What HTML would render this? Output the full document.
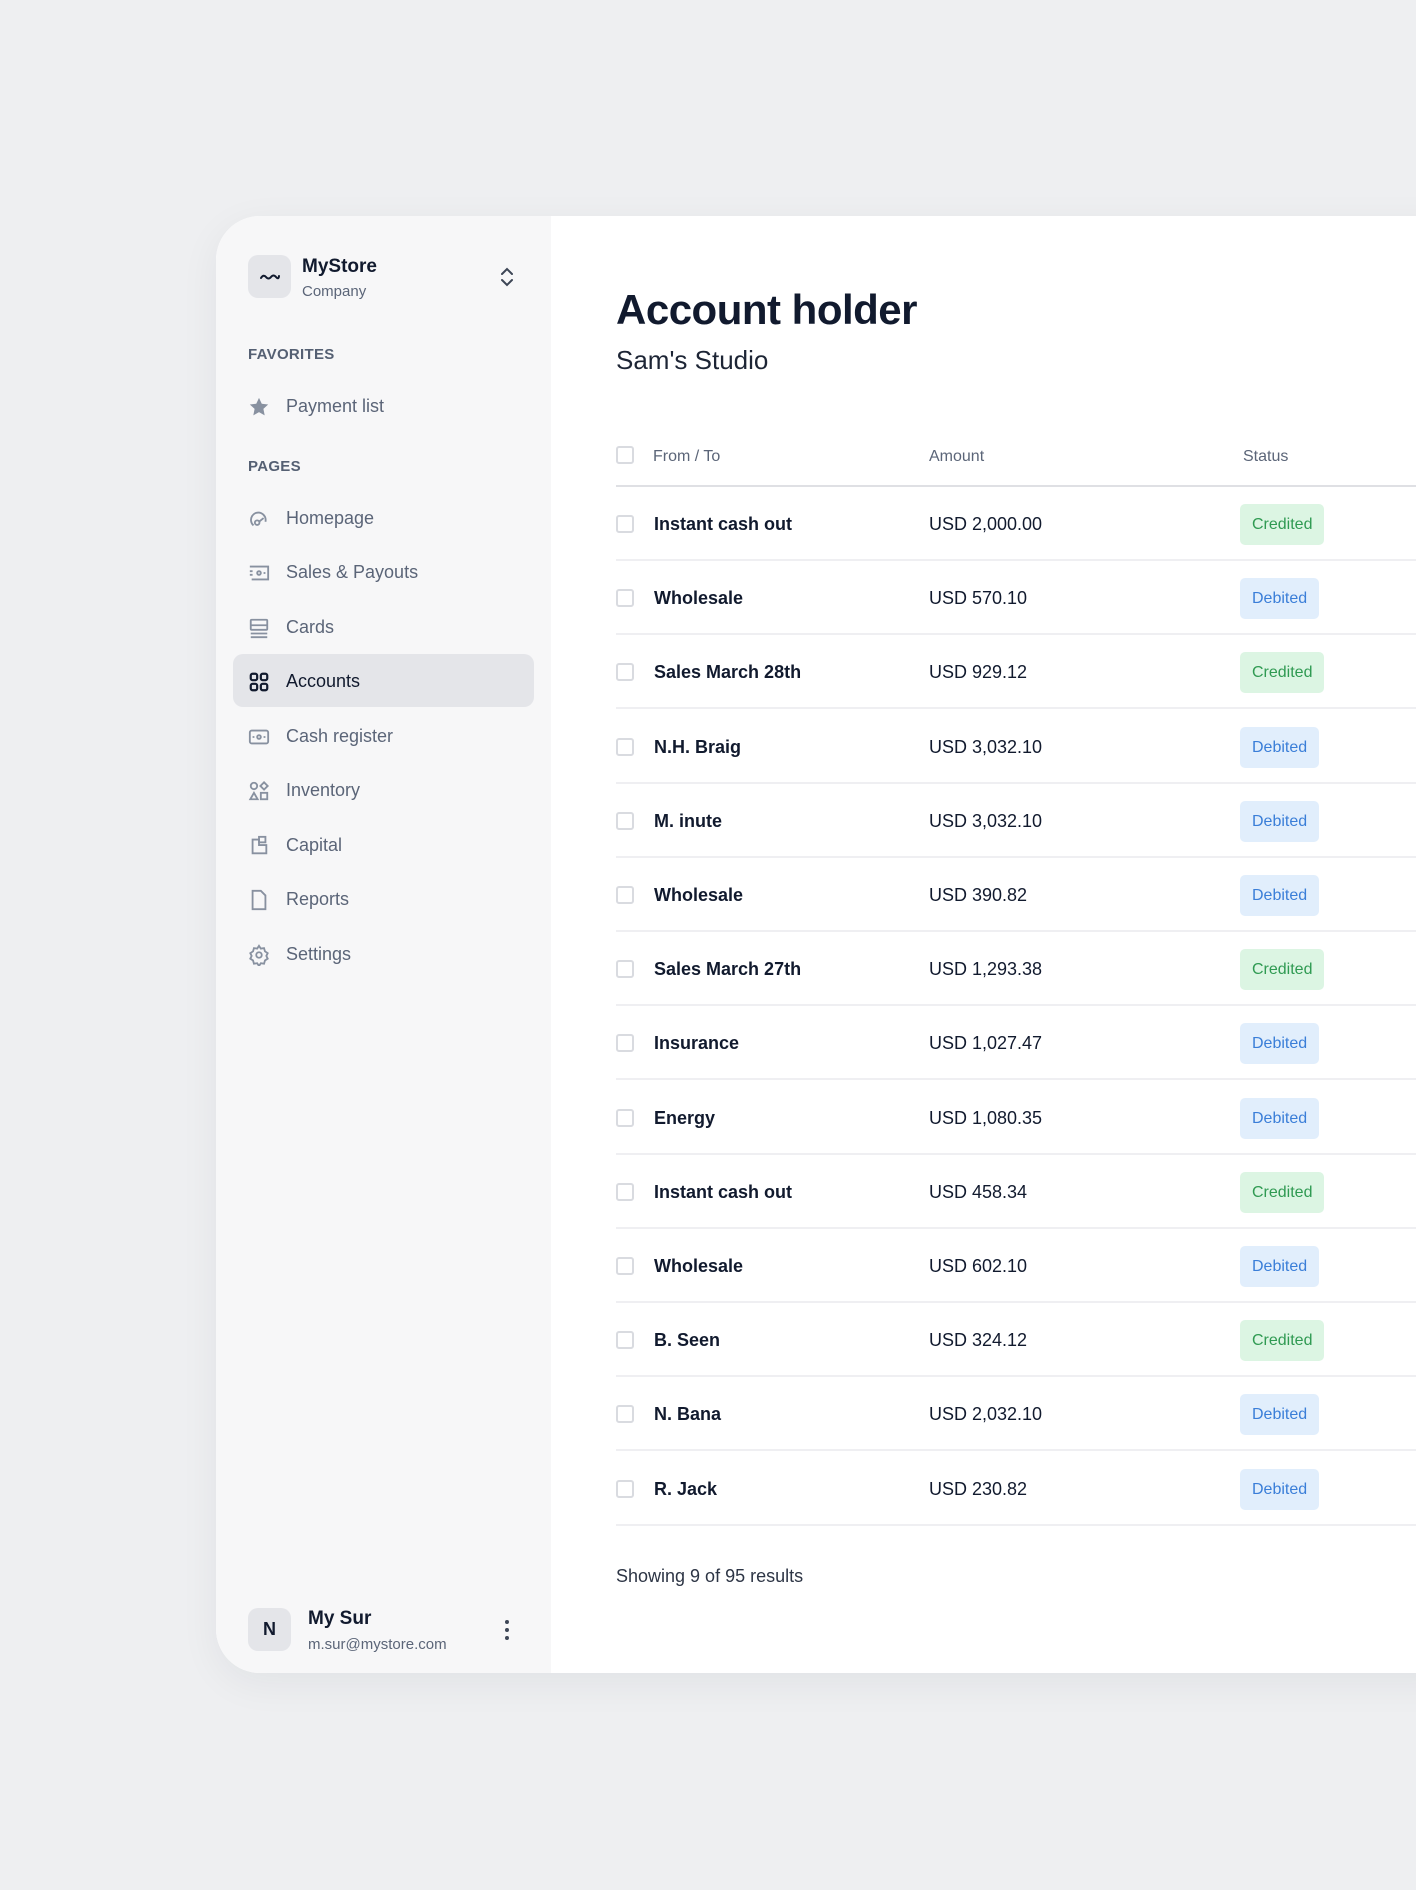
<!DOCTYPE html>
<html><head><meta charset="utf-8"><style>
*{box-sizing:border-box;margin:0;padding:0}
body{width:1416px;height:1890px;background:#eeeff1;font-family:"Liberation Sans",sans-serif;position:relative;overflow:hidden;color:#111a2e}
.card{position:absolute;left:216px;top:216px;width:1240px;height:1457px;border-radius:44px 0 0 44px;overflow:hidden;background:#fff;box-shadow:0 10px 40px rgba(20,30,50,.06)}
.side{position:absolute;left:0;top:0;width:335px;height:100%;background:#f7f7f8}
.abs{position:absolute}
.logo{left:32px;top:39px;width:43px;height:43px;border-radius:10px;background:#e4e5e9}
.t1{left:86px;top:40px;font-size:19px;font-weight:bold}
.t2{left:86px;top:67px;font-size:15px;color:#5b6578}
.sec{left:32px;font-size:15px;font-weight:bold;color:#556073;letter-spacing:.3px}
.nav{left:70px;font-size:18px;color:#5b6578}
.ic{left:32px;width:22px;height:22px}
.hl{left:17px;top:438px;width:301px;height:53px;border-radius:10px;background:#e4e5e9}
.main{position:absolute;left:335px;top:0;right:0;height:100%}
h1{position:absolute;left:65px;top:70px;font-size:42px;font-weight:bold;letter-spacing:-.5px}
.sub{left:65px;top:129px;font-size:26px;color:#1d2535}
.th{top:232px;font-size:16px;color:#5b6578}
.cb{width:18px;height:18px;border:2px solid #d9dbe0;border-radius:3px;background:#fff}
.row{position:absolute;left:65px;width:900px;height:74px;border-bottom:2px solid #efeff2}
.row .cb{position:absolute;left:0;top:28px}
.row .n{position:absolute;left:38px;top:27px;font-size:18px;font-weight:bold}
.row .a{position:absolute;left:313px;top:27px;font-size:18px}
.b{position:absolute;left:624px;top:17px;height:41px;padding:0 12px;line-height:41px;border-radius:5px;font-size:16px}
.c{background:#dcf5e3;color:#2f9a52}
.d{background:#e1eefc;color:#3a7ed8}
</style></head><body>
<div class="card">
<div class="side">
<div class="abs logo"><svg width="43" height="43" viewBox="0 0 43 43"><path d="M13 23 Q15.5 19 18 22 T23 22 T28 22 T31 21" fill="none" stroke="#111a2e" stroke-width="2" stroke-linecap="round"/></svg></div>
<div class="abs t1">MyStore</div>
<div class="abs t2">Company</div>
<svg class="abs" style="left:283px;top:50px" width="16" height="22" viewBox="0 0 16 22"><path d="M3 8l5-5 5 5M3 14l5 5 5-5" fill="none" stroke="#3d4656" stroke-width="2" stroke-linecap="round"/></svg>
<div class="abs sec" style="top:130px">FAVORITES</div>
<svg class="abs ic" style="top:180px" viewBox="0 0 24 24"><path d="M12 2l3 6.5 7 .8-5.2 4.8 1.4 7L12 17.6 5.8 21.1l1.4-7L2 9.3l7-.8z" fill="#8891a0"/></svg>
<div class="abs nav" style="top:180px">Payment list</div>
<div class="abs sec" style="top:242px">PAGES</div>
<div class="abs hl"></div>
<svg class="abs ic" style="top:292px" viewBox="0 0 24 24" fill="none" stroke="#8891a0" stroke-width="2"><path d="M6 19A8 8 0 1 1 19 15"/><circle cx="10" cy="16" r="2.5"/><path d="M12 15l5-4"/></svg>
<div class="abs nav" style="top:292px">Homepage</div>
<svg class="abs ic" style="top:346px" viewBox="0 0 24 24" fill="none" stroke="#8891a0" stroke-width="2"><path d="M2 5h20v14H4M2 10h3M2 14h3"/><circle cx="12" cy="12" r="2"/><path d="M17 12h2"/></svg>
<div class="abs nav" style="top:346px">Sales &amp; Payouts</div>
<svg class="abs ic" style="top:401px" viewBox="0 0 24 24" fill="none" stroke="#8891a0" stroke-width="2"><rect x="3" y="3" width="18" height="11" rx="1"/><path d="M3 9h18M3 18h18M3 22h18"/></svg>
<div class="abs nav" style="top:401px">Cards</div>
<svg class="abs ic" style="top:455px" viewBox="0 0 24 24" fill="none" stroke="#111a2e" stroke-width="2.4"><rect x="3" y="3" width="7" height="7" rx="2"/><rect x="14" y="3" width="7" height="7" rx="2"/><rect x="3" y="14" width="7" height="7" rx="2"/><rect x="14" y="14" width="7" height="7" rx="2"/></svg>
<div class="abs nav" style="top:455px;color:#111a2e">Accounts</div>
<svg class="abs ic" style="top:510px" viewBox="0 0 24 24" fill="none" stroke="#8891a0" stroke-width="2"><rect x="2" y="5" width="20" height="14" rx="2"/><circle cx="12" cy="12" r="2"/><path d="M5 12h2M17 12h2"/></svg>
<div class="abs nav" style="top:510px">Cash register</div>
<svg class="abs ic" style="top:564px" viewBox="0 0 24 24" fill="none" stroke="#8891a0" stroke-width="2"><circle cx="6.5" cy="6.5" r="3.5"/><path d="M17.5 2.5l4 4-4 4-4-4z"/><path d="M6.5 14l4 7h-8z"/><rect x="14" y="14" width="7" height="7"/></svg>
<div class="abs nav" style="top:564px">Inventory</div>
<svg class="abs ic" style="top:619px" viewBox="0 0 24 24" fill="none" stroke="#8891a0" stroke-width="2"><path d="M5 5v15h15v-9h-8V5z"/><rect x="12" y="2" width="7" height="6"/></svg>
<div class="abs nav" style="top:619px">Capital</div>
<svg class="abs ic" style="top:673px" viewBox="0 0 24 24" fill="none" stroke="#8891a0" stroke-width="2"><path d="M5 2h9l5 5v15H5z"/></svg>
<div class="abs nav" style="top:673px">Reports</div>
<svg class="abs ic" style="top:728px" viewBox="0 0 24 24" fill="none" stroke="#8891a0" stroke-width="2"><circle cx="12" cy="12" r="3"/><path d="M12 2l2 3 3.5-.5 1 3.5 3 2-1.5 3 1.5 3-3 2-1 3.5-3.5-.5-2 3-2-3-3.5.5-1-3.5-3-2 1.5-3-1.5-3 3-2 1-3.5 3.5.5z"/></svg>
<div class="abs nav" style="top:728px">Settings</div>
<div class="abs" style="left:32px;top:1392px;width:43px;height:43px;border-radius:10px;background:#e4e5e9;text-align:center;line-height:43px;font-weight:bold;font-size:18px">N</div>
<div class="abs" style="left:92px;top:1392px;font-size:19px;font-weight:bold">My Sur</div>
<div class="abs" style="left:92px;top:1420px;font-size:15px;color:#5b6578">m.sur@mystore.com</div>
<svg class="abs" style="left:287px;top:1403px" width="8" height="22"><circle cx="4" cy="3" r="2" fill="#3d4656"/><circle cx="4" cy="11" r="2" fill="#3d4656"/><circle cx="4" cy="19" r="2" fill="#3d4656"/></svg>
</div>
<div class="main">
<h1>Account holder</h1>
<div class="abs sub">Sam's Studio</div>
<div class="abs cb" style="left:65px;top:230px"></div>
<div class="abs th" style="left:102px">From / To</div>
<div class="abs th" style="left:378px">Amount</div>
<div class="abs th" style="left:692px">Status</div>
<div class="abs" style="left:65px;top:269px;width:900px;height:2px;background:#dfe0e4"></div>
<div class="row" style="top:271px"><div class="cb"></div><div class="n">Instant cash out</div><div class="a">USD 2,000.00</div><div class="b c">Credited</div></div>
<div class="row" style="top:345px"><div class="cb"></div><div class="n">Wholesale</div><div class="a">USD 570.10</div><div class="b d">Debited</div></div>
<div class="row" style="top:419px"><div class="cb"></div><div class="n">Sales March 28th</div><div class="a">USD 929.12</div><div class="b c">Credited</div></div>
<div class="row" style="top:494px"><div class="cb"></div><div class="n">N.H. Braig</div><div class="a">USD 3,032.10</div><div class="b d">Debited</div></div>
<div class="row" style="top:568px"><div class="cb"></div><div class="n">M. inute</div><div class="a">USD 3,032.10</div><div class="b d">Debited</div></div>
<div class="row" style="top:642px"><div class="cb"></div><div class="n">Wholesale</div><div class="a">USD 390.82</div><div class="b d">Debited</div></div>
<div class="row" style="top:716px"><div class="cb"></div><div class="n">Sales March 27th</div><div class="a">USD 1,293.38</div><div class="b c">Credited</div></div>
<div class="row" style="top:790px"><div class="cb"></div><div class="n">Insurance</div><div class="a">USD 1,027.47</div><div class="b d">Debited</div></div>
<div class="row" style="top:865px"><div class="cb"></div><div class="n">Energy</div><div class="a">USD 1,080.35</div><div class="b d">Debited</div></div>
<div class="row" style="top:939px"><div class="cb"></div><div class="n">Instant cash out</div><div class="a">USD 458.34</div><div class="b c">Credited</div></div>
<div class="row" style="top:1013px"><div class="cb"></div><div class="n">Wholesale</div><div class="a">USD 602.10</div><div class="b d">Debited</div></div>
<div class="row" style="top:1087px"><div class="cb"></div><div class="n">B. Seen</div><div class="a">USD 324.12</div><div class="b c">Credited</div></div>
<div class="row" style="top:1161px"><div class="cb"></div><div class="n">N. Bana</div><div class="a">USD 2,032.10</div><div class="b d">Debited</div></div>
<div class="row" style="top:1236px"><div class="cb"></div><div class="n">R. Jack</div><div class="a">USD 230.82</div><div class="b d">Debited</div></div>
<div class="abs" style="left:65px;top:1350px;font-size:18px;color:#2d3545">Showing 9 of 95 results</div>
</div>
</div>
</body></html>
